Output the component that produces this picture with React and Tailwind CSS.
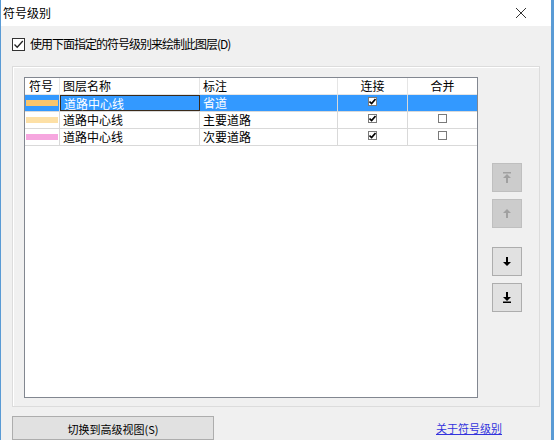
import { useState } from "react";

const rows = [
  { color: "#f9c56c", name: "道路中心线", label: "省道", join: true, merge: null },
  { color: "#fde0a6", name: "道路中心线", label: "主要道路", join: true, merge: false },
  { color: "#f6a6df", name: "道路中心线", label: "次要道路", join: true, merge: false },
];

const font = { fontFamily: '"Noto Sans CJK SC", "Noto Sans", sans-serif' };

const MiniCheck = ({ checked }) => (
  <span className="inline-flex w-[9px] h-[9px] border border-[#7a7a7a] bg-white items-center justify-center">
    {checked && (
      <svg width="7" height="7" viewBox="0 0 7 7">
        <path d="M0.5 3.5 L2.6 5.6 L6.5 1" stroke="#000" strokeWidth="1.6" fill="none" />
      </svg>
    )}
  </span>
);

const ArrowBtn = ({ kind, disabled }) => {
  const c = disabled ? "#a0a0a0" : "#000";
  return (
    <button
      className={
        "w-[30px] h-[29px] flex items-center justify-center border " +
        (disabled ? "bg-[#cccccc] border-[#bfbfbf]" : "bg-[#e1e1e1] border-[#adadad]")
      }
    >
      <svg width="10" height="11" viewBox="0 0 10 11">
        {kind === "top" && (
          <>
            <rect x="1" y="0" width="8" height="1.5" fill={c} />
            <path d="M5 2 L9 6 L6 6 L6 11 L4 11 L4 6 L1 6 Z" fill={c} />
          </>
        )}
        {kind === "up" && <path d="M5 1 L9 5 L6 5 L6 10 L4 10 L4 5 L1 5 Z" fill={c} />}
        {kind === "down" && <path d="M5 10 L9 6 L6 6 L6 1 L4 1 L4 6 L1 6 Z" fill={c} />}
        {kind === "bottom" && (
          <>
            <path d="M5 9 L9 5 L6 5 L6 0 L4 0 L4 5 L1 5 Z" fill={c} />
            <rect x="1" y="9.5" width="8" height="1.5" fill={c} />
          </>
        )}
      </svg>
    </button>
  );
};

export default function App() {
  const [useLevels, setUseLevels] = useState(true);

  return (
    <div
      className="w-[554px] h-[440px] overflow-hidden bg-[#f0f0f0] border-l border-r-[3px] border-[#5a9bd5] flex flex-col text-[11px] text-black"
      style={font}
    >
      <div className="h-[26px] bg-white flex items-center justify-between pl-[2px] pr-[24px] shrink-0">
        <span className="text-[12px]">符号级别</span>
        <svg width="12" height="12" viewBox="0 0 12 12">
          <path d="M1 1 L11 11 M11 1 L1 11" stroke="#333" strokeWidth="1" />
        </svg>
      </div>

      <label className="flex items-center gap-[5px] pl-[11px] mt-[11px] h-[14px]">
        <span
          onClick={() => setUseLevels(!useLevels)}
          className="w-[13px] h-[13px] border border-[#333] bg-white flex items-center justify-center"
        >
          {useLevels && (
            <svg width="11" height="11" viewBox="0 0 11 11">
              <path d="M1.5 5.5 L4.2 8.3 L9.8 2" stroke="#222" strokeWidth="1.3" fill="none" />
            </svg>
          )}
        </span>
        <span className="text-[12px] tracking-[-1px]">使用下面指定的符号级别来绘制此图层(D)</span>
      </label>

      <div className="ml-[11px] mr-[11px] mt-[15px] h-[348px] border border-[#dcdcdc] shadow-[inset_1px_1px_0_#fff] flex pl-[11px] pt-[10px] pb-[8px]">
        <div className="w-[454px] h-full border border-[#828790] bg-white flex flex-col text-[12px]">
          <div className="flex h-[17px] border-b border-[#e5e5e5] leading-[16px]">
            <div className="w-[35px] pl-[4px] border-r border-[#e5e5e5]">符号</div>
            <div className="w-[140px] pl-[3px] border-r border-[#e5e5e5]">图层名称</div>
            <div className="w-[138px] pl-[3px] border-r border-[#e5e5e5]">标注</div>
            <div className="w-[70px] text-center border-r border-[#e5e5e5]">连接</div>
            <div className="w-[69px] text-center">合并</div>
          </div>
          {rows.map((r, i) => {
            const sel = i === 0;
            return (
              <div
                key={i}
                className={
                  "flex h-[17px] border-b border-[#d9d9d9] leading-[16px] " + (sel ? "bg-[#3399ff] text-white" : "")
                }
              >
                <div className="w-[35px] flex items-center pl-[1px] border-r border-[#d9d9d9]">
                  <span className="w-[32px] h-[6px]" style={{ background: r.color }} />
                </div>
                <div
                  className={
                    "w-[140px] pl-[3px] border-r " + (sel ? "border border-[#3a2a1a]" : "border-[#d9d9d9]")
                  }
                >
                  {r.name}
                </div>
                <div className="w-[138px] pl-[3px] border-r border-[#d9d9d9]">{r.label}</div>
                <div className="w-[70px] flex justify-center pt-[2px] border-r border-[#d9d9d9]">
                  <MiniCheck checked={r.join} />
                </div>
                <div className="w-[69px] flex justify-center pt-[2px]">
                  {r.merge !== null && <MiniCheck checked={r.merge} />}
                </div>
              </div>
            );
          })}
        </div>

        <div className="flex flex-col ml-[14px] pt-[86px]">
          <ArrowBtn kind="top" disabled />
          <div className="h-[7px]" />
          <ArrowBtn kind="up" disabled />
          <div className="h-[19px]" />
          <ArrowBtn kind="down" />
          <div className="h-[7px]" />
          <ArrowBtn kind="bottom" />
        </div>
      </div>

      <div className="flex items-start justify-between pl-[11px] pr-[49px] mt-[9px]">
        <button className="w-[202px] h-[24px] bg-[#e1e1e1] border border-[#adadad] text-[11px] pt-[2px]">
          切换到高级视图(S)
        </button>
        <a className="text-[#3333dd] underline text-[11px] mt-[4px]">关于符号级别</a>
      </div>
    </div>
  );
}
